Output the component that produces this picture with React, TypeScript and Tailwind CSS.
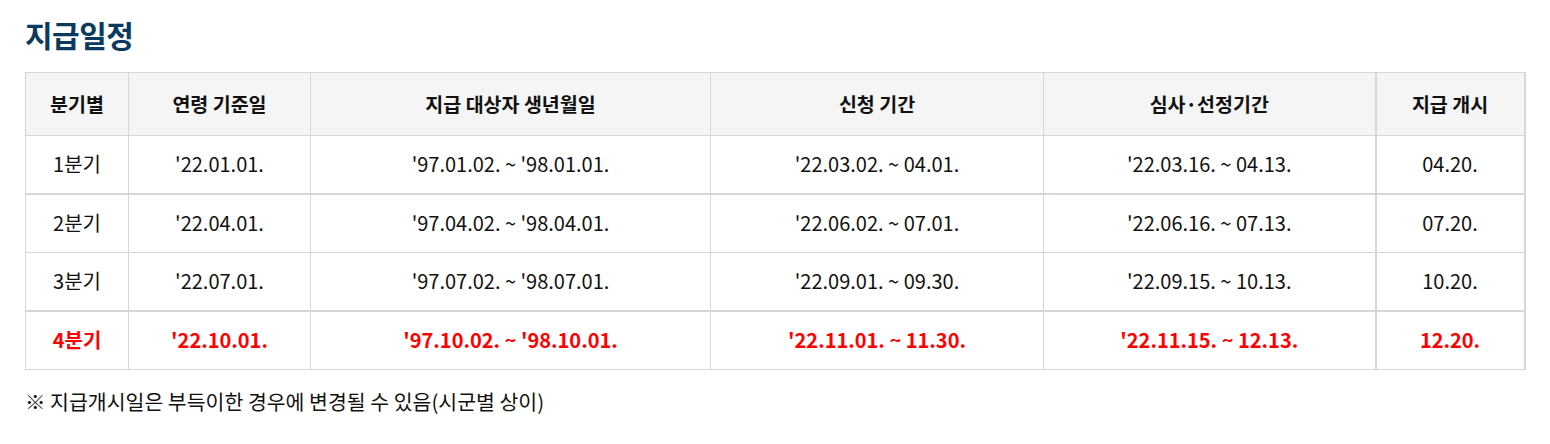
import React from "react";

const rows = [
  ["1분기", "'22.01.01.", "'97.01.02. ~ '98.01.01.", "'22.03.02. ~ 04.01.", "'22.03.16. ~ 04.13.", "04.20."],
  ["2분기", "'22.04.01.", "'97.04.02. ~ '98.04.01.", "'22.06.02. ~ 07.01.", "'22.06.16. ~ 07.13.", "07.20."],
  ["3분기", "'22.07.01.", "'97.07.02. ~ '98.07.01.", "'22.09.01. ~ 09.30.", "'22.09.15. ~ 10.13.", "10.20."],
  ["4분기", "'22.10.01.", "'97.10.02. ~ '98.10.01.", "'22.11.01. ~ 11.30.", "'22.11.15. ~ 12.13.", "12.20."],
];

const heads = ["분기별", "연령 기준일", "지급 대상자 생년월일", "신청 기간", "심사·선정기간", "지급 개시"];

export default function App() {
  return (
    <div
      className="w-[1550px] h-[444px] bg-white px-[25px] pt-[14px]"
      style={{ fontFamily: '"Noto Sans CJK KR", "Noto Sans", sans-serif' }}
    >
      <h2 className="text-[30px] leading-[40px] font-bold text-[#0a3a5e] tracking-[-0.5px]">지급일정</h2>
      <table className="mt-[18px] w-[1499px] border-collapse table-fixed text-[20px] text-[#111]">
        <colgroup>
          <col className="w-[103px]" />
          <col className="w-[182px]" />
          <col className="w-[400px]" />
          <col className="w-[333px]" />
          <col className="w-[332px]" />
          <col className="w-[149px]" />
        </colgroup>
        <thead>
          <tr className="h-[63px] bg-[#f5f5f5]">
            {heads.map((h, i) => (
              <th
                key={i}
                className={`border-[#d6d6da] font-bold text-[19.5px] text-center align-middle border-t border-b ${
                  i === 0 ? "border-l" : i === 5 ? "border-l-2 border-r-2" : "border-l"
                }`}
              >
                {h}
              </th>
            ))}
          </tr>
        </thead>
        <tbody>
          {rows.map((r, ri) => {
            const red = ri === 3;
            const thick = ri === 0 || ri === 2;
            return (
              <tr key={ri} className={ri % 2 === 0 ? "h-[58px]" : "h-[59px]"}>
                {r.map((c, ci) => (
                  <td
                    key={ci}
                    className={`border-[#d6d6da] text-center align-middle leading-[24px] ${thick ? "border-b-2" : "border-b"} ${
                      ci === 5 ? "border-l-2 border-r-2" : "border-l"
                    } ${red ? "text-[#ff0000] font-bold" : ""}`}
                  >
                    {c}
                  </td>
                ))}
              </tr>
            );
          })}
        </tbody>
      </table>
      <p className="mt-[16px] text-[20.5px] leading-[30px] text-[#111]">※ 지급개시일은 부득이한 경우에 변경될 수 있음(시군별 상이)</p>
    </div>
  );
}
